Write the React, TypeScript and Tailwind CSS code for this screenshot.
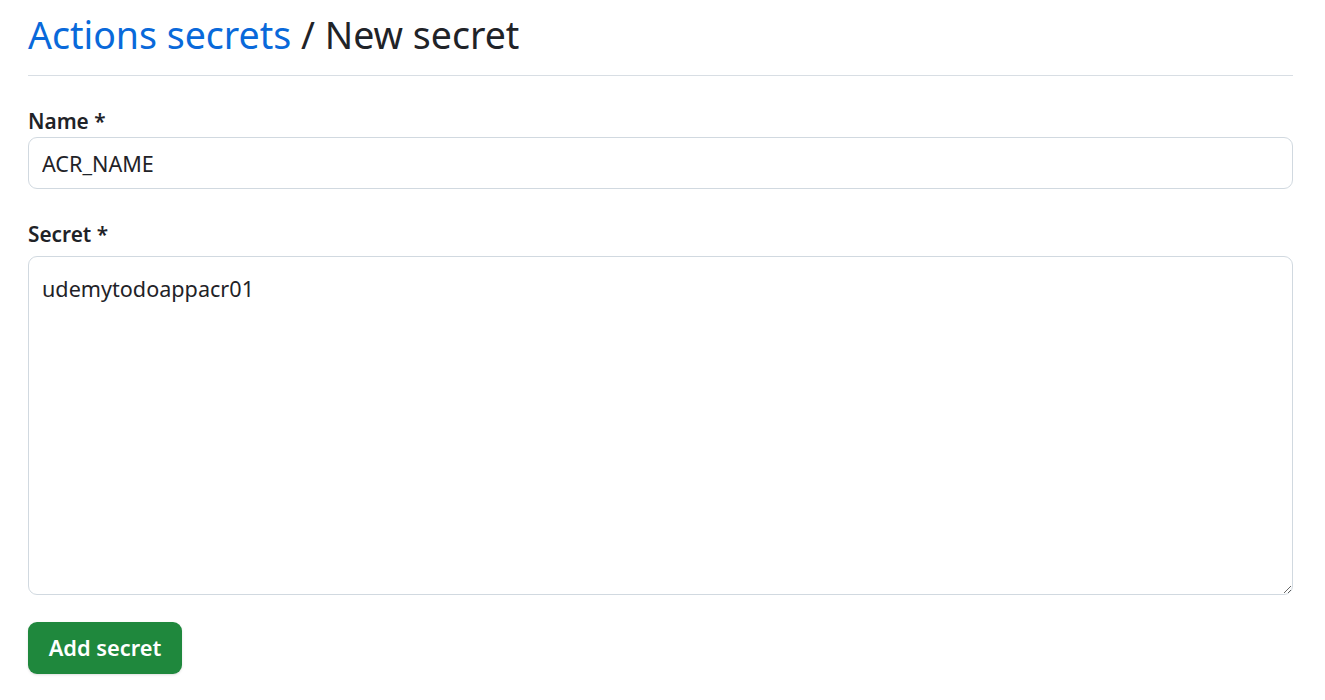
export default function App() {
  return (
    <div
      className="min-h-[700px] bg-white pl-[28px] pr-[32px] pt-[12px] text-[#1f2328]"
      style={{ fontFamily: '"Noto Sans", "Liberation Sans", sans-serif' }}
    >
      <h1 className="border-b border-[#d8dee4] pb-[18px] text-[37.5px] leading-[45px] font-normal">
        <a href="#" className="text-[#0969da]">
          Actions secrets
        </a>{' '}
        / New secret
      </h1>

      <form className="pt-[30px]">
        <label className="block text-[20.8px] leading-[30px] font-semibold">Name *</label>
        <input
          defaultValue="ACR_NAME"
          className="mt-[1px] block h-[52px] w-full rounded-[9px] border border-[#d1d9e0] px-[13px] text-[21.6px] text-[#1f2328] outline-none"
        />

        <label className="mt-[30px] block text-[20.8px] leading-[30px] font-semibold">Secret *</label>
        <textarea
          defaultValue="udemytodoappacr01"
          className="mt-[7px] block h-[339px] w-full resize-y rounded-[9px] border border-[#d1d9e0] px-[13px] pt-[17px] text-[21.6px] leading-[30px] text-[#1f2328] outline-none"
        />

        <button
          type="button"
          className="mt-[27px] h-[52px] w-[154px] rounded-[9px] bg-[#1f883d] text-[21.8px] font-semibold text-white shadow-sm"
        >
          Add secret
        </button>
      </form>
    </div>
  );
}
